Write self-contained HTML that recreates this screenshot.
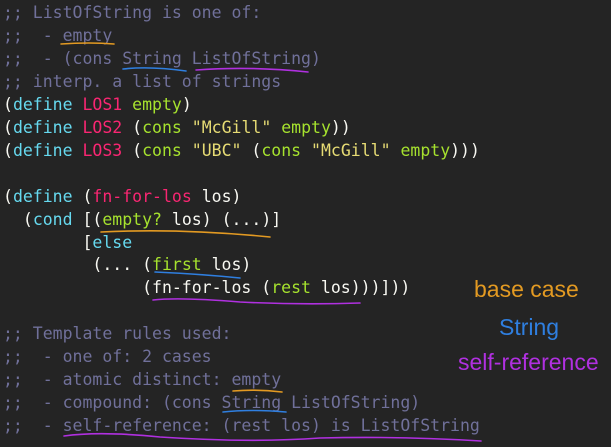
<!DOCTYPE html>
<html><head><meta charset="utf-8"><style>
html,body{margin:0;padding:0;background:#242424;width:611px;height:447px;overflow:hidden}
pre{position:absolute;left:3px;top:2px;margin:0;font-family:"DejaVu Sans Mono",monospace;font-size:16.5px;line-height:22.95px;color:#f8f8f2}
.c{color:#70709a}.k{color:#66d9ef}.r{color:#f92672}.g{color:#a6e22e}.s{color:#e6db74}
.a{position:absolute;font-family:"Liberation Sans",sans-serif;font-size:23px;white-space:nowrap}
svg{position:absolute;left:0;top:0}
</style></head><body>
<pre><span class="c">;; ListOfString is one of:
;;  - empty
;;  - (cons String ListOfString)
;; interp. a list of strings</span>
(<span class="k">define</span> <span class="r">LOS1</span> <span class="g">empty</span>)
(<span class="k">define</span> <span class="r">LOS2</span> (<span class="g">cons</span> <span class="s">"McGill"</span> <span class="g">empty</span>))
(<span class="k">define</span> <span class="r">LOS3</span> (<span class="g">cons</span> <span class="s">"UBC"</span> (<span class="g">cons</span> <span class="s">"McGill"</span> <span class="g">empty</span>)))

(<span class="k">define</span> (<span class="r">fn-for-los</span> los)
  (<span class="k">cond</span> [(<span class="g">empty?</span> los) (...)]
        [<span class="k">else</span>
         (... (<span class="g">first</span> los)
              (fn-for-los (<span class="g">rest</span> los)))]))

<span class="c">;; Template rules used:
;;  - one of: 2 cases
;;  - atomic distinct: empty
;;  - compound: (cons String ListOfString)
;;  - self-reference: (rest los) is ListOfString</span></pre>
<div class="a" style="left:474px;top:276px;color:#e39a22">base case</div>
<div class="a" style="left:499px;top:314px;color:#2f7fe0">String</div>
<div class="a" style="left:458px;top:349px;color:#b030e0">self-reference</div>
<svg width="611" height="447" fill="none" stroke-width="1.6" stroke-linecap="round">
<path d="M61 44 Q90 42 114 44" stroke="#e39a22"/>
<path d="M123 69 Q150 66 186 71" stroke="#2f7fe0"/>
<path d="M196 70 Q250 66 308 72" stroke="#b030e0"/>
<path d="M101 232 Q180 228 270 237" stroke="#e39a22"/>
<path d="M155 272 Q200 274 240 278" stroke="#2f7fe0"/>
<path d="M153 300 Q180 297 240 302 Q300 305 360 303" stroke="#b030e0"/>
<path d="M233 391 Q258 389 282 392" stroke="#e39a22"/>
<path d="M223 412 Q250 409 286 412" stroke="#2f7fe0"/>
<path d="M64 436 Q100 431 160 437 Q250 443 320 438 Q400 436 481 441" stroke="#b030e0"/>
</svg>
</body></html>
